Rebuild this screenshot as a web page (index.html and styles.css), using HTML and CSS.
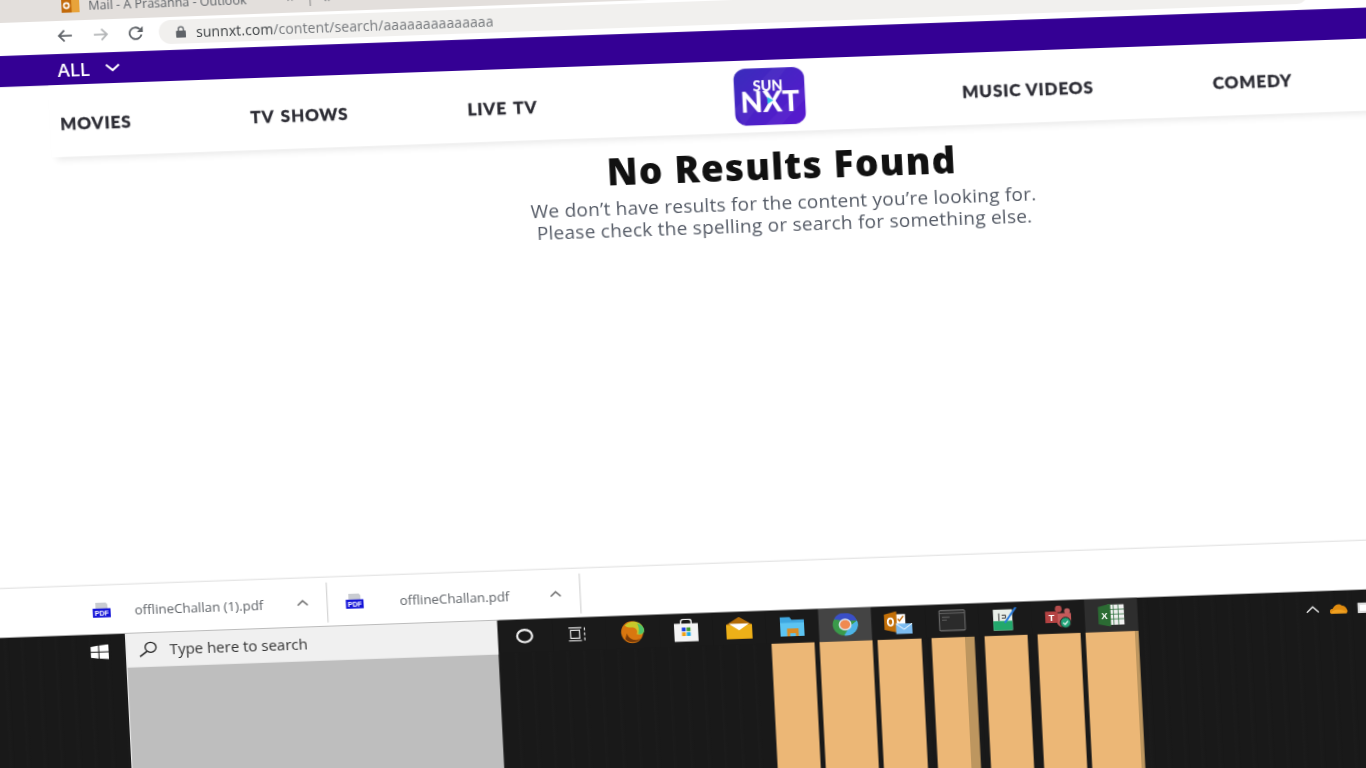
FILE: index.html
```html
<!DOCTYPE html>
<html lang="en">

<head>
    <meta charset="UTF-8">
    <title>No Results Found</title>
    <link rel="stylesheet" href="styles.css">
</head>

<body>
    <div class="screen">
        <div class="tabstrip">
            <svg class="tab-icon" viewBox="0 0 18 17"><rect x="7" y="2" width="11" height="13" fill="#e8a33a"/><rect y="1" width="10" height="14" fill="#c26a0a"/><circle cx="5" cy="8" r="2.6" fill="none" stroke="#fff" stroke-width="1.6"/></svg>
            <span class="tab-title">Mail - A Prasanna - Outlook</span>
            <span class="tab-close">×</span>
            <span class="tab-sep"></span>
            <span class="tab-next">‹›</span>
        </div>

        <div class="toolbar">
            <svg class="tool back" viewBox="0 0 16 14"><path d="M15 7H2M7.500 1.500 2 7l5.500 5.500" fill="none" stroke="#5f6368" stroke-width="1.800"/></svg>
            <svg class="tool forward" viewBox="0 0 16 14"><path d="M1 7h13M8.500 1.500 14 7l-5.500 5.500" fill="none" stroke="#b4b6b8" stroke-width="1.800"/></svg>
            <svg class="tool reload" viewBox="0 0 16 14"><path d="M13.500 8.500A6 5.800 0 1 1 12 3" fill="none" stroke="#5f6368" stroke-width="1.800"/><path d="M15 0v6H9z" fill="#5f6368"/></svg>
            <div class="omnibox">
                <svg class="lock" viewBox="0 0 10 12"><path d="M2.500 5V3.500a2.500 2.500 0 0 1 5 0V5" fill="none" stroke="#5f6368" stroke-width="1.300"/><rect y="5" width="10" height="7" rx="1" fill="#5f6368"/></svg>
                <span class="url">sunnxt.com<span class="url-path">/content/search/aaaaaaaaaaaaaa</span></span>
            </div>
        </div>

        <div class="topbar">
            <span class="all">ALL</span>
            <svg class="all-arrow" viewBox="0 0 16 9"><path d="M1.500 1.500 8 7l6.500-5.500" fill="none" stroke="#fff" stroke-width="2"/></svg>
        </div>

        <div class="header">
            <a class="nav-link">MOVIES</a>
            <a class="nav-link">TV SHOWS</a>
            <a class="nav-link">LIVE TV</a>
            <svg class="logo" viewBox="0 0 71 57">
                <defs>
                    <linearGradient id="logoBg" x1="0" y1="0" x2="1" y2="1">
                        <stop offset="0" stop-color="#3a2cbc"/>
                        <stop offset="1" stop-color="#5a18d0"/>
                    </linearGradient>
                </defs>
                <rect width="71" height="57" rx="12" fill="url(#logoBg)"/>
                <path d="M0 40 40 0h14L8 57zM30 57 71 18v14L46 57z" fill="#fff" opacity=".04"/>
                <text x="19" y="23" class="logo-sun" textLength="30" lengthAdjust="spacingAndGlyphs">SUN</text>
                <text x="6" y="44" class="logo-nxt" textLength="59" lengthAdjust="spacingAndGlyphs">NXT</text>
                <path d="M33 29l6 3.500-6 3.500z" fill="#29c4e8"/>
            </svg>
            <a class="nav-link music">MUSIC VIDEOS</a>
            <a class="nav-link">COMEDY</a>
        </div>

        <div class="main">
            <h1>No Results Found</h1>
            <p>We don’t have results for the content you’re looking for.<br>Please check the spelling or search for something else.</p>
        </div>

        <div class="shelf">
            <div class="download first">
                <svg class="pdf" viewBox="0 0 18 16"><path d="M3 0h10l2 2v12H3z" fill="#c9ccd2"/><rect y="6" width="18" height="9" fill="#1414d8"/><text x="9" y="13" class="pdf-text" text-anchor="middle">PDF</text></svg>
                <span class="file-name">offlineChallan (1).pdf</span>
                <svg class="file-arrow" viewBox="0 0 12 7"><path d="M1 6l5-4.500L11 6" fill="none" stroke="#666" stroke-width="1.500"/></svg>
            </div>
            <div class="download second">
                <svg class="pdf" viewBox="0 0 18 16"><path d="M3 0h10l2 2v12H3z" fill="#c9ccd2"/><rect y="6" width="18" height="9" fill="#1414d8"/><text x="9" y="13" class="pdf-text" text-anchor="middle">PDF</text></svg>
                <span class="file-name">offlineChallan.pdf</span>
                <svg class="file-arrow" viewBox="0 0 12 7"><path d="M1 6l5-4.500L11 6" fill="none" stroke="#666" stroke-width="1.500"/></svg>
            </div>
        </div>

        <div class="taskbar">
            <div class="start">
                <svg class="win" viewBox="0 0 18 15"><path d="M0 2.200 7.600 1v6H0zM8.600.9 18 0v7H8.600zM0 8h7.600v6L0 13zM8.600 8H18v7l-9.400-1z" fill="#fff"/></svg>
            </div>
            <div class="search-col">
                <div class="search-box">
                    <svg class="search-icon" viewBox="0 0 19 16"><ellipse cx="12" cy="6.500" rx="5.500" ry="5" fill="none" stroke="#222" stroke-width="1.300"/><path d="M8 10.500 1 15.500" stroke="#222" stroke-width="1.500"/></svg>
                    <span class="search-text">Type here to search</span>
                </div>
            </div>
            <div class="tasks">
                <div class="task"><svg class="cortana" viewBox="0 0 18 15"><ellipse cx="9" cy="7.500" rx="7.500" ry="6.200" fill="none" stroke="#eee" stroke-width="2.200"/></svg></div>
                <div class="task"><svg class="taskview" viewBox="0 0 18 15"><path d="M3 3.500h9v8H3zM1 1h13M1 14h13M17 1v3M17 6v3M17 11v3" fill="none" stroke="#ddd" stroke-width="1.200"/></svg></div>
                <div class="task"><svg class="app-icon" viewBox="0 0 27 24"><circle cx="13.500" cy="12" r="11.500" fill="#d9770f"/><path d="M6 5C11-1 23-1 26 9c1 5-4 7-8 5 2-3 0-7-5-7-3 0-5 0-7-2z" fill="#c9c82a"/><path d="M19 3c4 1 7 4 7 7s-3 5-6 4c1-4 1-7-1-11z" fill="#4fc46a"/><path d="M8 13c1 6 8 9 14 6-4 4-12 5-16 0z" fill="#7a3c08"/></svg></div>
                <div class="task"><svg class="app-icon" viewBox="0 0 27 24"><path d="M8 6V3a3 2.500 0 0 1 3-2.500h5A3 2.500 0 0 1 19 3v3" fill="none" stroke="#eee" stroke-width="1.500"/><rect x="1" y="5" width="25" height="19" fill="#f4f4f4"/><rect x="9" y="9" width="4" height="4" fill="#1b3fe0"/><rect x="14" y="9" width="4" height="4" fill="#3c9a2c"/><rect x="9" y="14" width="4" height="4" fill="#f2a216"/><rect x="14" y="14" width="4" height="4" fill="#18a8e8"/></svg></div>
                <div class="task"><svg class="app-icon" viewBox="0 0 27 24"><path d="M0 8 13.500 0 27 8v15H0z" fill="#b26c07"/><path d="M0 8h27v15H0z" fill="#edb018"/><path d="M3 7h21l-10.500 7z" fill="#fff"/></svg></div>
                <div class="task"><svg class="app-icon" viewBox="0 0 27 24"><path d="M1 2h10l2 3h13v17H1z" fill="#3fa7e0"/><path d="M1 8h25v14H1z" fill="#5cc4f2"/><path d="M8 14h12v8h-3v-3h-6v3H8z" fill="#d98c24"/></svg></div>
                <div class="task active"><svg class="app-icon" viewBox="0 0 27 24"><ellipse cx="13.500" cy="12" rx="13" ry="11.500" fill="#3a9a4a"/><path d="M2 6A13 11.500 0 0 1 26 8H13z" fill="#3a4fc8"/><path d="M26 8A13 11.500 0 0 1 12 23.500L18 14z" fill="#4db4e8"/><ellipse cx="13.500" cy="12" rx="6" ry="5.500" fill="#f08a50" stroke="#dfe6f0" stroke-width="1.500"/></svg></div>
                <div class="task"><svg class="app-icon wide" viewBox="0 0 29 24"><rect x="11" y="3" width="11" height="11" fill="#fff"/><path d="M14 8l2 2 4-5" fill="none" stroke="#c26a0a" stroke-width="1.500"/><path d="M0 3 13 0v22L0 19z" fill="#c26f08"/><ellipse cx="6.500" cy="11" rx="2.800" ry="3.800" fill="none" stroke="#fff" stroke-width="1.800"/><rect x="12" y="13" width="17" height="11" fill="#7cbcf0"/><path d="M12 13l8.500 6 8.500-6" fill="none" stroke="#fff"/></svg></div>
                <div class="task"><svg class="app-icon" viewBox="0 0 27 24"><rect y="1" width="27" height="21" rx="1" fill="#2b2b2b" stroke="#888"/><path d="M0 4h27" stroke="#666"/><path d="M3 8h8M3 11h5" stroke="#555" stroke-width="1.500"/></svg></div>
                <div class="task"><svg class="app-icon" viewBox="0 0 27 24"><rect x="1" y="2" width="20" height="22" fill="#e8eee8"/><rect x="1" y="14" width="20" height="10" fill="#22a86c"/><path d="M7 6v8M10 8h4v3h-4" stroke="#333" fill="none"/><path d="M13 16 25 0" stroke="#2a7de0" stroke-width="2"/></svg></div>
                <div class="task"><svg class="app-icon" viewBox="0 0 27 24"><circle cx="14" cy="3.500" r="3.500" fill="#b54b4b"/><circle cx="23" cy="6" r="3" fill="#c06060"/><path d="M12 8h15v10c0 3-3 5-7 5-5 0-8-3-8-6z" fill="#c55a5a"/><rect y="6" width="13" height="12" fill="#b34242"/><text x="6.500" y="16" class="teams-text" text-anchor="middle">T</text><circle cx="21" cy="18" r="5.500" fill="#23a47a" stroke="#1a1a1a"/><path d="M18.500 18l2 2 3-3.500" fill="none" stroke="#fff" stroke-width="1.200"/></svg></div>
                <div class="task active-dim"><svg class="app-icon" viewBox="0 0 27 24"><rect x="10" y="1" width="17" height="21" fill="#f0f0f0"/><path d="M16 1v21M21 1v21M10 6h17M10 11h17M10 16h17" stroke="#2c6e3c" stroke-width=".8"/><path d="M0 3 13 0v24L0 21z" fill="#2b6b33"/><text x="6.500" y="16" class="excel-text" text-anchor="middle">X</text></svg></div>
                <div class="bar gap"></div>
                <div class="bar gap"></div>
                <div class="bar gap"></div>
                <div class="bar gap"></div>
                <div class="bar gap"></div>
                <div class="bar"></div>
                <div class="bar full"></div>
                <div class="bar"></div>
                <div class="bar side"></div>
                <div class="bar"></div>
                <div class="bar"></div>
                <div class="bar full side thin"></div>
            </div>
            <div class="tray">
                <svg class="tray-arrow" viewBox="0 0 14 8"><path d="M1 7l6-5.500L13 7" fill="none" stroke="#e8e8e8" stroke-width="1.400"/></svg>
                <svg class="onedrive" viewBox="0 0 18 10"><path d="M1 10C-1 8 0 5 3 5c1-3 6-6 9-3 3 0 5 3 5 4 2 2 0 4-1 4z" fill="#e08c10"/><path d="M1 10c0-2 3-4 7-4s8 1 9 4z" fill="#f0a020"/></svg>
                <span class="battery"></span>
            </div>
        </div>
    </div>
</body>

</html>
```

FILE: styles.css
```css
html,
body {
    margin: 0;
    height: 768px;
    overflow: hidden;
    background: #fff;
}

/* the whole screen is a slanted photo, everything else is flat inside it */
.screen {
    width: 1500px;
    margin-left: -40px;
    transform-origin: 40px 0;
    transform: matrix(1, -0.0355, 0.05, 1, 0, 0);
    filter: blur(0.35px);
    font-family: "Open Sans", sans-serif;
    background: #fff;
}

.tabstrip {
    height: 23px;
    box-sizing: border-box;
    padding: 0 0 6px 101px;
    display: flex;
    align-items: center;
    background: #e3dfdc;
    color: #5f6368;
    font-size: 12.500px;
}

.tab-icon {
    width: 18px;
    height: 17px;
    margin-right: 9px;
}

.tab-title {
    width: 198px;
    white-space: nowrap;
}

.tab-close {
    width: 23px;
}

.tab-sep {
    width: 1px;
    height: 16px;
    margin-right: 12px;
    background: #888;
}

.tab-next {
    font-weight: 700;
}

.toolbar {
    height: 33px;
    box-sizing: border-box;
    padding: 3px 0 0 95px;
    display: flex;
    align-items: flex-start;
    background: #fff;
}

.tool {
    width: 16px;
    height: 14px;
    margin-top: 5px;
}

.forward {
    margin-left: 20px;
}

.reload {
    margin-left: 19px;
}

.omnibox {
    width: 1149px;
    height: 24px;
    margin-left: 15px;
    box-sizing: border-box;
    padding-left: 17px;
    display: flex;
    align-items: center;
    background: #f1f0ee;
    border-radius: 12px;
}

.lock {
    width: 10px;
    height: 12px;
    margin-right: 10px;
}

.url {
    font-size: 14px;
    letter-spacing: 0.08px;
    color: #3c4043;
    white-space: nowrap;
}

.url-path {
    color: #75787c;
}

.topbar {
    height: 31px;
    box-sizing: border-box;
    padding-left: 94px;
    display: flex;
    align-items: center;
    background: #340094;
}

.all {
    color: #fff;
    font-size: 18.500px;
    font-weight: 600;
}

.all-arrow {
    width: 16px;
    height: 9px;
    margin-left: 15px;
}

.header {
    height: 72px;
    margin-left: 84px;
    box-sizing: border-box;
    padding: 4px 0 0 10px;
    display: flex;
    align-items: center;
    gap: 119px;
    background: #fff;
    box-shadow: 0 8px 8px -5px rgba(0, 0, 0, 0.11);
    position: relative;
}

.nav-link {
    font-family: Lato, sans-serif;
    font-size: 17px;
    font-weight: 900;
    letter-spacing: 0.9px;
    word-spacing: 2px;
    -webkit-text-stroke: 0.3px #2b2b33;
    color: #2b2b33;
    white-space: nowrap;
}

.music {
    word-spacing: 0;
}

.logo {
    width: 71px;
    height: 57px;
    margin: -3px 38px 0 78px;
}

.logo-sun {
    font-family: Lato, sans-serif;
    font-size: 15px;
    font-weight: 900;
    fill: #fff;
}

.logo-nxt {
    font-family: Lato, sans-serif;
    font-size: 29px;
    font-weight: 900;
    fill: #fff;
}

.main {
    height: 428px;
    box-sizing: border-box;
    padding: 12px 0 0 124px;
    text-align: center;
}

h1 {
    margin: 0;
    font-size: 37px;
    font-weight: 800;
    letter-spacing: 1.2px;
    line-height: 44px;
    color: #111;
}

p {
    margin: 4px 0 0;
    font-size: 19px;
    letter-spacing: 0.25px;
    line-height: 22px;
    color: #555b66;
}

.shelf {
    height: 50px;
    box-sizing: border-box;
    padding-left: 102px;
    display: flex;
    align-items: center;
    background: #fff;
    border-top: 1px solid #ddd;
}

.download {
    height: 40px;
    display: flex;
    align-items: center;
    border-right: 1px solid #ccc;
}

.first {
    width: 234px;
}

.second {
    width: 234px;
    padding-left: 18px;
}

.pdf {
    width: 18px;
    height: 16px;
}

.pdf-text {
    font-family: "Liberation Sans", sans-serif;
    font-size: 7px;
    font-weight: 700;
    fill: #fff;
}

.file-name {
    margin-left: 24px;
    width: 162px;
    font-size: 13.300px;
    color: #5f6368;
    white-space: nowrap;
}

.second .file-name {
    margin-left: 36px;
    width: 150px;
}

.file-arrow {
    width: 12px;
    height: 7px;
}

.taskbar {
    height: 200px;
    display: flex;
    background-color: #191919;
    background-image: repeating-linear-gradient(90deg, #191919 0, #191919 11px, #1b1b1b 12px, #181818 17px);
}

.start {
    width: 133px;
    height: 36px;
    box-sizing: border-box;
    padding: 10px 0 0 98px;
}

.win {
    width: 18px;
    height: 15px;
    display: block;
}

.search-col {
    width: 372px;
    background: #bebebe;
    border-left: 1px solid #eee;
    box-sizing: border-box;
}

.search-box {
    height: 34px;
    box-sizing: border-box;
    padding: 0 0 2px 12px;
    display: flex;
    align-items: center;
    background: #f0f0f0;
}

.search-icon {
    width: 19px;
    height: 16px;
    margin-right: 12px;
}

.search-text {
    font-size: 15px;
    color: #333;
}

.tasks {
    margin-left: 2px;
    display: grid;
    grid-template-columns: repeat(12, 53.200px);
    grid-template-rows: 33px 170px;
}

.task {
    display: flex;
    align-items: center;
    justify-content: center;
    background: #1a1a1a;
}

.active {
    background: #444;
}

.active-dim {
    background: #2e2e2e;
}

.cortana {
    width: 18px;
    height: 15px;
    margin-right: 3px;
}

.taskview {
    width: 18px;
    height: 15px;
    margin-right: 6px;
}

.app-icon {
    width: 27px;
    height: 23px;
}

.wide {
    width: 29px;
}

.teams-text,
.excel-text {
    font-family: "Liberation Sans", sans-serif;
    font-size: 10px;
    font-weight: 700;
    fill: #fff;
}

.bar {
    margin: 0 5px;
    background: #ecb776;
}

.gap {
    visibility: hidden;
}

.full {
    margin: 0;
}

.side {
    background: linear-gradient(90deg, #ecb776 78%, #bd965f 78%);
}

.thin {
    background: linear-gradient(90deg, #ecb776 93%, #bd965f 93%);
}

.tray {
    margin-left: 168px;
    height: 36px;
    display: flex;
    align-items: center;
}

.tray-arrow {
    width: 14px;
    height: 8px;
}

.onedrive {
    width: 18px;
    height: 10px;
    margin-left: 10px;
}

.battery {
    width: 12px;
    height: 6px;
    margin-left: 10px;
    border: 2px solid #ddd;
    background: #fff;
}
```
